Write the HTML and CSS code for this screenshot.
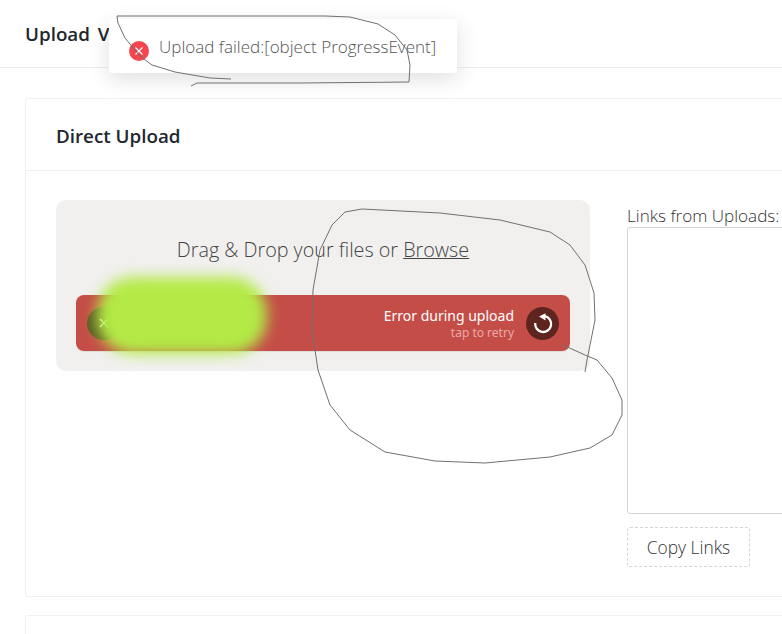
FILE: index.html
```html
<!DOCTYPE html>
<html>
<head>
	<meta charset="utf-8">
	<title>Upload Videos</title>
	<link rel="stylesheet" href="styles.css">
</head>
<body>
	<div class="page">
		<header class="topbar">
			<h1>Upload Videos</h1>
		</header>
		<main class="content">
			<section class="card">
				<div class="card-head">Direct Upload</div>
				<div class="card-body">
					<div class="drop">
						<p class="drop-label">Drag &amp; Drop your files or <u>Browse</u></p>
						<div class="item">
							<span class="round cancel">
								<svg width="12" height="12" viewBox="0 0 12 12"><path d="M2 2l8 8M10 2l-8 8" stroke="#fff" stroke-width="1.6" fill="none"/></svg>
							</span>
							<div class="status">
								<div class="status-main">Error during upload</div>
								<div class="status-sub">tap to retry</div>
							</div>
							<span class="round retry">
								<svg width="24" height="24" viewBox="0 0 24 24"><path d="M4.2 12A8 8 0 1 0 14 5.2" stroke="#fff" stroke-width="2.3" fill="none"/><path d="M14.5 2.2V9.4L8 5.6z" fill="#fff"/></svg>
							</span>
						</div>
					</div>
					<div class="links">
						<label class="links-label">Links from Uploads:</label>
						<textarea class="links-box"></textarea>
						<button class="copy">Copy Links</button>
					</div>
				</div>
			</section>
			<section class="card next"></section>
		</main>
	</div>

	<div class="blob"></div>

	<div class="toast">
		<span class="toast-icon">
			<svg width="10" height="10" viewBox="0 0 10 10"><path d="M1.5 1.5l7 7M8.5 1.5l-7 7" stroke="#fff" stroke-width="1.2" fill="none"/></svg>
		</span>
		Upload failed:[object ProgressEvent]
	</div>

	<svg class="scribble" width="782" height="634" viewBox="0 0 782 634">
		<polyline points="117,16 118,23 125,38 140,56 152,65 175,72 210,78 231,79"/>
		<polyline points="191,86 197,83 230,83 300,83 409,82 410,65 407,50 395,35 378,24 350,17 325,16 117,16"/>
		<polyline points="585,372 587,360 595,320 594,293 585,265 570,245 550,232 500,220 440,213 362,209 345,212 332,225 320,250 313,290 312,330 318,370 330,405 350,430 385,452 435,461 485,463 550,457 590,448 612,435 622,415 622,400 612,378 597,360 585,355 563,345"/>
	</svg>
</body>
</html>
```

FILE: styles.css
```css
html, body {
	margin: 0;
	height: 634px;
	overflow: hidden;
	background: #fff;
}
body {
	width: 782px;
	position: relative;
	font-family: "Open Sans", "Noto Sans", sans-serif;
	color: #4a4a4a;
}
.page {
	width: 1120px;
}
.topbar {
	height: 67px;
	border-bottom: 1px solid #eeeeee;
	display: flex;
	align-items: center;
	padding-left: 25px;
}
.topbar h1 {
	margin: 0;
	font-size: 18.8px;
	font-weight: 600;
	word-spacing: 3px;
	color: #22262e;
}
.content {
	padding: 30px 25px;
}
.card {
	border: 1px solid #f0f0f0;
	border-radius: 3px;
}
.card.next {
	margin-top: 18px;
	height: 100px;
}
.card-head {
	height: 71px;
	line-height: 74px;
	padding-left: 30px;
	font-size: 18.8px;
	font-weight: 600;
	color: #22262e;
	border-bottom: 1px solid #f0f0f0;
}
.card-body {
	display: flex;
	gap: 37px;
	padding: 29px 30px;
}
.drop {
	width: 494px;
	height: 111px;
	padding: 40px 20px 20px;
	background: #f1f0ef;
	border-radius: 10px;
	flex-shrink: 0;
}
.drop-label {
	margin: 0 0 32px;
	height: 23px;
	line-height: 19px;
	text-align: center;
	font-size: 19.75px;
	font-weight: 300;
	color: #444;
}
.item {
	height: 56px;
	background: #c44e47;
	border-radius: 8px;
	display: flex;
	align-items: center;
	padding: 0 11px;
	color: #fff;
	box-shadow: 0 1px 1px rgba(0,0,0,.08);
}
.round {
	width: 33px;
	height: 33px;
	border-radius: 50%;
	display: flex;
	align-items: center;
	justify-content: center;
	flex-shrink: 0;
}
.cancel {
	background: #5c5a24;
}
.status {
	margin-left: auto;
	margin-right: 12px;
	margin-top: 1px;
	text-align: right;
	font-family: "Noto Sans", sans-serif;
}
.status-main {
	font-size: 14px;
	line-height: 19px;
}
.status-sub {
	font-size: 12px;
	line-height: 16px;
	color: #e9aaa6;
}
.retry {
	background: #5f241f;
}
.links {
	flex: 1;
	display: flex;
	flex-direction: column;
	align-items: flex-start;
}
.links-label {
	font-size: 17.1px;
	line-height: 31px;
	height: 27px;
	font-weight: 300;
	color: #333;
}
.links-box {
	display: block;
	width: 100%;
	height: 287px;
	box-sizing: border-box;
	border: 1px solid #d4d4d4;
	border-radius: 3px;
	resize: none;
	background: #fff;
}
.copy {
	margin-top: 13px;
	width: 123px;
	height: 40px;
	padding: 0;
	background: #fff;
	border: 1px dashed #d4d4d4;
	border-radius: 3px;
	font-family: "Open Sans", "Noto Sans", sans-serif;
	font-size: 17.4px;
	font-weight: 300;
	color: #333;
}

/* overlays drawn on top of the page */
.blob {
	position: absolute;
	left: 97px;
	top: 277px;
	width: 170px;
	height: 77px;
	background: #b3ea46;
	border-radius: 36px;
	filter: blur(7px);
}
.toast {
	position: absolute;
	left: 109px;
	top: 19px;
	width: 348px;
	height: 54px;
	box-sizing: border-box;
	padding-left: 20px;
	background: #fff;
	border-radius: 3px;
	box-shadow: 0 6px 22px rgba(0,0,0,.13);
	display: flex;
	align-items: center;
	gap: 10px;
	font-size: 17.05px;
	font-weight: 300;
	color: #555;
}
.toast-icon {
	width: 20px;
	height: 20px;
	margin-top: 10px;
	border-radius: 50%;
	background: #f5454f;
	display: flex;
	align-items: center;
	justify-content: center;
}
.scribble {
	position: absolute;
	left: 0;
	top: 0;
	fill: none;
	stroke: #707070;
	stroke-width: 1;
}
```
